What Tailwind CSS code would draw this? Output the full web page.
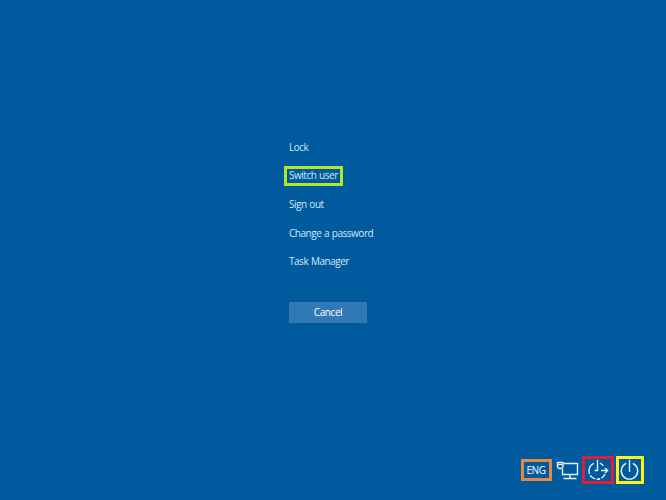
<!DOCTYPE html>
<html lang="en">
<head>
<meta charset="utf-8">
<title>Security options</title>
<script src="https://cdn.jsdelivr.net/npm/@tailwindcss/browser@4"></script>
</head>
<body class="h-[500px] w-[666px] overflow-hidden bg-[#005a9e] font-['Open_Sans','Noto_Sans',sans-serif] text-[10px] tracking-[-0.48px] [word-spacing:0.6px] text-[#d3e8f8]">
<main class="flex h-full flex-col justify-between pt-[137px] pb-[16px]">
  <div class="pl-[284px]">
    <nav class="flex flex-col items-start gap-[8.7px] leading-5 whitespace-nowrap">
      <a class="h-5 px-[5px]"><span>Lock</span></a>
      <a class="flex h-5 w-[59px] items-center border-[3px] border-[#b5e62e] pb-[2px] pl-[2px]"><span>Switch user</span></a>
      <a class="h-5 px-[5px]"><span>Sign out</span></a>
      <a class="h-5 px-[5px]"><span>Change a password</span></a>
      <a class="-mt-px h-5 px-[5px]"><span>Task Manager</span></a>
    </nav>
    <button class="mt-[31px] ml-[5px] flex h-[21px] w-[78px] items-center justify-center bg-[#3179b5] pt-px tracking-[-0.43px] text-white"><span>Cancel</span></button>
  </div>
  <footer class="flex items-center pl-[521px] text-white">
    <button class="flex h-[22px] w-[31px] items-center justify-center border-[3px] border-[#e8873f] pr-px tracking-[-0.5px]">ENG</button>
    <svg class="mt-px ml-[4px] h-[20px] w-[24px]" viewBox="0 0 24 20" fill="none" stroke="#e4f1fb" stroke-width="1.4">
      <path d="M8 2.5H21.5V13.5H6.5V8"/><path d="M14 13.5V17.2M7.5 17.5H20.5"/>
      <path d="M1.5 1.5H7V6L5.5 7.5H3L1.5 6Z"/><path d="M2 3.5H6.5"/>
    </svg>
    <button class="ml-[2px] flex h-7 w-[32px] items-center justify-center border-[3px] border-[#df1f39]">
      <svg class="h-[22px] w-[22px] shrink-0" viewBox="0 0 22 22" fill="none" stroke="#e4f1fb" stroke-width="1.4">
        <path d="M6.8 4.3A8.3 8.3 0 0 0 2 11.8A8.3 8.3 0 0 0 18 15" stroke-dasharray="12.5 1.5 6 1.5 3.5 1.5"/>
        <path d="M10.5 .7V11.5M7.6 11.5H11.2M14 11.5H20.5M18 9L20.6 11.5L18 14M13 4L16.5 6.8"/>
      </svg>
    </button>
    <button class="ml-[2px] flex h-7 w-7 items-center justify-center border-[3px] border-[#fbf21c]">
      <svg class="h-[22px] w-[22px] shrink-0" viewBox="0 0 22 22" fill="none" stroke="#e4f1fb" stroke-width="1.4">
        <path d="M7.2 4.4A8.2 8.2 0 1 0 13.8 4.4M10.5 .8V13"/>
      </svg>
    </button>
  </footer>
</main>
</body>
</html>
